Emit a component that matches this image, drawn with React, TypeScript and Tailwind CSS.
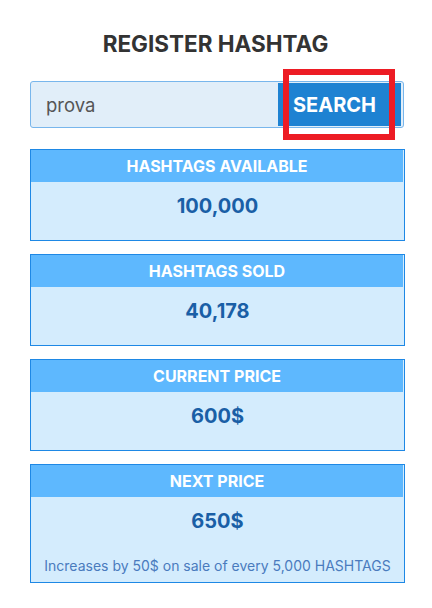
export default function App() {
  const cards = [
    { title: 'HASHTAGS AVAILABLE', value: '100,000' },
    { title: 'HASHTAGS SOLD', value: '40,178' },
    { title: 'CURRENT PRICE', value: '600$' },
  ];

  return (
    <div className="w-[432px] h-[608px] bg-white px-[30px] pt-[30px]" style={{ fontFamily: 'Inter, "Liberation Sans", sans-serif' }}>
      <h1 className="text-center text-[22.5px] leading-[28px] font-bold text-[#333333] mr-[1px]">REGISTER HASHTAG</h1>

      {/* search box */}
      <div className="relative mt-[23px] h-[47px] w-[374px] flex border border-[#78b6ec] rounded-[3px] bg-[#e1eef9]">
        <div className="flex-1 flex items-center pl-[15px] pt-[2px] text-[18.5px] text-[#555555]">prova</div>
        <button className="w-[123px] my-[1px] mr-[2px] pl-[15px] text-left bg-[#1e82d2] text-white font-bold text-[20px]">SEARCH</button>
        {/* red highlight */}
        <div className="absolute left-[252px] top-[-13px] w-[112px] h-[71px] border-[6px] border-[#ed1c24]" />
      </div>

      <div className="mt-[21px] flex flex-col gap-[13px] w-[375px]">
        {cards.map((c) => (
          <div key={c.title} className="h-[92px] border border-[#1e88e5] bg-[#d4ecfd] flex flex-col">
            <div className="h-[32px] mr-[1px] bg-[#5eb8fe] flex items-center justify-center text-white font-bold text-[16px]">{c.title}</div>
            <div className="pt-[9px] text-center text-[20px] font-bold text-[#1a5fa6]">{c.value}</div>
          </div>
        ))}
        <div className="h-[119px] border border-[#1e88e5] bg-[#d4ecfd] flex flex-col">
          <div className="h-[32px] mr-[1px] bg-[#5eb8fe] flex items-center justify-center text-white font-bold text-[16px]">NEXT PRICE</div>
          <div className="pt-[9px] text-center text-[20px] font-bold text-[#1a5fa6]">650$</div>
          <div className="mt-auto pb-[6px] text-center text-[14px] text-[#4a7bbd]">Increases by 50$ on sale of every 5,000 HASHTAGS</div>
        </div>
      </div>
    </div>
  );
}
